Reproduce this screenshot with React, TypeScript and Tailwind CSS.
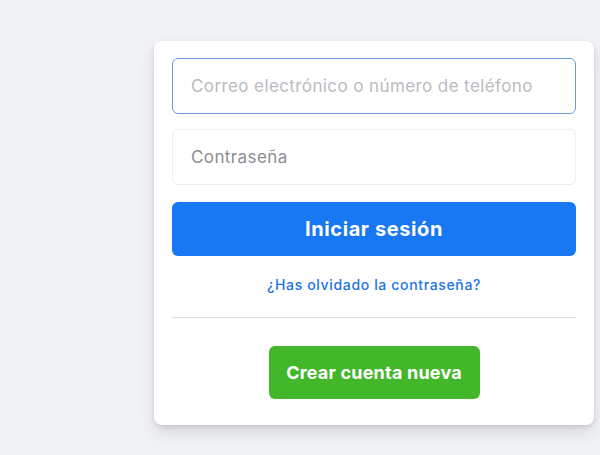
export default function App() {
  return (
    <div
      className="min-h-screen w-full bg-[#f0f2f5] flex justify-end items-start pt-[41px] pr-[6px]"
      style={{ fontFamily: "Inter, 'Noto Sans', sans-serif" }}
    >
      <div className="w-[440px] bg-white rounded-lg shadow-[0_2px_4px_rgba(0,0,0,0.1),0_8px_16px_rgba(0,0,0,0.1)] px-[18px] pt-[17px] pb-[26px] flex flex-col">
        <input
          type="text"
          placeholder="Correo electrónico o número de teléfono"
          className="h-[56px] w-full rounded-md border border-[#6a9ae0] px-[18px] text-[17px] tracking-[0.4px] text-[#1c1e21] placeholder:text-[#b9bcc1] outline-none"
        />
        <input
          type="password"
          placeholder="Contraseña"
          className="mt-[15px] h-[56px] w-full rounded-md border border-[#eceef0] px-[18px] text-[17px] tracking-[0.4px] text-[#1c1e21] placeholder:text-[#8a8d91] outline-none"
        />
        <button className="mt-[17px] h-[54px] w-full rounded-md bg-[#1877f2] text-white text-[20px] tracking-[0.6px] font-bold">
          Iniciar sesión
        </button>
        <a href="#" className="mt-[19px] self-center text-[14px] tracking-[0.65px] font-medium text-[#1a73e8] leading-[19px]">
          ¿Has olvidado la contraseña?
        </a>
        <div className="mt-[23px] h-px bg-[#dadde1]" />
        <button className="mt-[28px] self-center h-[53px] w-[211px] rounded-md bg-[#42b72a] text-white text-[18px] tracking-[0.2px] font-bold">
          Crear cuenta nueva
        </button>
      </div>
    </div>
  );
}
